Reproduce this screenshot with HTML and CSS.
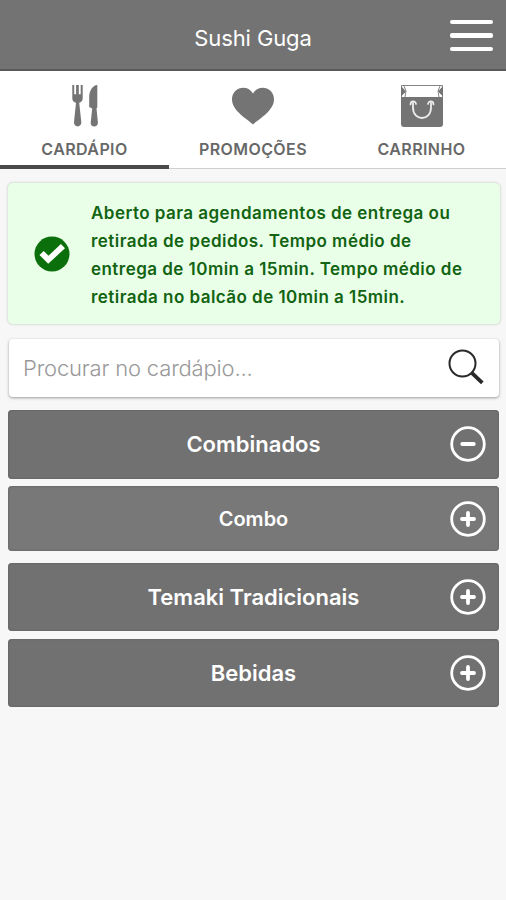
FILE: index.html
```html
<!DOCTYPE html>
<html lang="pt-BR">
<head>
<meta charset="utf-8">
<meta name="viewport" content="width=device-width, initial-scale=1">
<title>Sushi Guga</title>
<link rel="stylesheet" href="styles.css">
</head>
<body>
<header class="header">
  <h1 class="header-title"><span>Sushi Guga</span></h1>
  <button class="menu-button" aria-label="Menu"><i></i><i></i><i></i></button>
</header>
<nav class="tabs">
  <a class="tab tab-active">
    <svg class="tab-icon" width="44" height="44" viewBox="0 0 44 44" fill="#747474">
      <path d="M9.3 1h1.9v9.2h1.9V1h2.7v9.2h1.9V1h2v13.4c0 2.400-1.400 3.800-3.500 4.300l2.100 19.400c.4 5.800-7.700 5.800-7.300 0l2-19.400c-2.300-.5-3.700-1.900-3.700-4.300z"/>
      <path d="M34.300 1v22.300l-.8 1.200 1.400 14c.4 5.200-7.800 5.200-7.200 0l1.500-14-3-1.400V12.600C26.300 6.800 29.800 1 34.300 1z"/>
    </svg>
    <span class="tab-label">CARDÁPIO</span>
  </a>
  <a class="tab">
    <svg class="tab-icon" width="44" height="44" viewBox="0 0 44 44" fill="#747474">
      <path d="M22 40.500C17 35.500 1 27 1 15.500C1 3.500 16-.5 22 9.500C28-.5 43 3.500 43 15.500C43 27 27 35.500 22 40.500z"/>
    </svg>
    <span class="tab-label">PROMOÇÕES</span>
  </a>
  <a class="tab">
    <svg class="tab-icon" width="44" height="44" viewBox="0 0 44 44" fill="none">
      <path fill="#747474" d="M1 13h42v27q0 3-3 3H4q-3 0-3-3z"/>
      <path stroke="#858585" stroke-width="1" d="M1.500 14V1.500h41V14"/>
      <path fill="#747474" d="M1 2l5 5.500L1 12.500zM43 2l-5 5.500 5 5z"/>
      <path stroke="#858585" stroke-width="1" d="M4 2l2 5-1 6M40 2l-2 5 1 6"/>
      <path stroke="#eee" stroke-width="1.700" stroke-linecap="round" d="M10.500 20.500c0-4 5.500-4 5.500-.5M28 20c0-3.500 5.500-3.500 5.500.5"/>
      <path stroke="#eee" stroke-width="1.800" stroke-linecap="round" d="M13 19v4.500c0 14 18 14 18 0v-4.500"/>
    </svg>
    <span class="tab-label">CARRINHO</span>
  </a>
</nav>
<main class="content">
  <section class="notice">
    <svg class="notice-icon" width="36" height="36" viewBox="0 0 36 36">
      <circle cx="18" cy="18" r="17.500" fill="#0b6f0b"/>
      <path d="M5.500 19l8.700 8.700L31 12.300 26.900 8 14.500 19.700 9.700 15z" fill="#fff"/>
    </svg>
    <p class="notice-text">Aberto para agendamentos de entrega ou<br>retirada de pedidos. Tempo médio de<br>entrega de 10min a 15min. Tempo médio de<br>retirada no balcão de 10min a 15min.</p>
  </section>
  <div class="search">
    <span class="search-text">Procurar no cardápio...</span>
    <svg width="36" height="36" viewBox="0 0 36 36" fill="none" stroke="#292929">
      <circle cx="14.500" cy="14.500" r="13" stroke-width="2"/>
      <path d="M23.800 23.800l10.500 10" stroke-width="3.800"/>
    </svg>
  </div>
  <div class="categories">
    <div class="category">
      <span class="category-name">Combinados</span>
      <svg class="toggle" width="36" height="36" viewBox="0 0 36 36" fill="none" stroke="#fff"><circle cx="18" cy="18" r="16.300" stroke-width="2.800"/><path d="M12.300 18h11.400" stroke-width="4" stroke-linecap="round"/></svg>
    </div>
    <div class="category category-small">
      <span class="category-name name-combo">Combo</span>
      <svg class="toggle" width="36" height="36" viewBox="0 0 36 36" fill="none" stroke="#fff"><circle cx="18" cy="18" r="16.300" stroke-width="2.800"/><path d="M12 18h12M18 12v12" stroke-width="3.800" stroke-linecap="round"/></svg>
    </div>
    <div class="category">
      <span class="category-name">Temaki Tradicionais</span>
      <svg class="toggle" width="36" height="36" viewBox="0 0 36 36" fill="none" stroke="#fff"><circle cx="18" cy="18" r="16.300" stroke-width="2.800"/><path d="M12 18h12M18 12v12" stroke-width="3.800" stroke-linecap="round"/></svg>
    </div>
    <div class="category">
      <span class="category-name">Bebidas</span>
      <svg class="toggle" width="36" height="36" viewBox="0 0 36 36" fill="none" stroke="#fff"><circle cx="18" cy="18" r="16.300" stroke-width="2.800"/><path d="M12 18h12M18 12v12" stroke-width="3.800" stroke-linecap="round"/></svg>
    </div>
  </div>
</main>
</body>
</html>
```
FILE: styles.css
```css
* { box-sizing: border-box; }
body {
  margin: 0;
  min-height: 900px;
  background: #f7f7f7;
  font-family: Inter, "Liberation Sans", sans-serif;
}
.header {
  display: grid;
  grid-template-columns: 56px 1fr 56px;
  height: 71px;
  background: #737373;
  border-bottom: 2px solid #595959;
}
.header-title {
  grid-column: 2;
  margin: 0;
  padding-top: 24px;
  text-align: center;
  color: #fff;
  font-size: 22px;
  line-height: 28px;
  font-weight: 400;
  letter-spacing: -0.1px;
}
.menu-button {
  display: flex;
  flex-direction: column;
  gap: 9px;
  padding: 20px 0 0;
  border: 0;
  background: none;
}
.menu-button i {
  width: 43px;
  height: 4.3px;
  border-radius: 2px;
  background: #fff;
}
.tabs {
  display: grid;
  grid-template-columns: 169px 168px 169px;
  height: 98px;
  background: #fff;
}
.tab {
  display: flex;
  flex-direction: column;
  align-items: center;
  padding-top: 13px;
  border-bottom: 1px solid #d0d0d0;
}
.tab-active { border-bottom: 4px solid #4b4b4b; }
.tab-icon { flex: none; }
.tab-label {
  margin-top: 11px;
  color: #686868;
  font-size: 16px;
  line-height: 20px;
  font-weight: 600;
  letter-spacing: 0.4px;
  white-space: nowrap;
}
.content { padding: 13px 5px 0 7px; }
.notice {
  display: flex;
  align-items: center;
  height: 143px;
  padding-left: 26px;
  border: 1px solid #dfe6df;
  border-radius: 6px;
  background: #e9ffe8;
  box-shadow: 0 0 2px #ddd;
}
.notice-icon { flex: none; }
.notice-text {
  margin: 1px 0 0 21px;
  padding-top: 1px;
  color: #126312;
  font-size: 17px;
  line-height: 28px;
  font-weight: 600;
  letter-spacing: 0.46px;
  white-space: nowrap;
}
.search {
  display: flex;
  align-items: center;
  justify-content: space-between;
  height: 58px;
  margin: 14px 0 0 2px;
  width: 490px;
  padding: 0 15px 2px 14px;
  border-radius: 4px;
  background: #fff;
  box-shadow: 0 1px 3px #999;
}
.search-text {
  padding-top: 2px;
  color: #999;
  font-size: 22px;
  font-weight: 300;
  letter-spacing: -0.17px;
}
.categories {
  display: grid;
  gap: 7.5px;
  margin: 13px 0 0 1px;
  width: 491px;
}
.category {
  display: grid;
  grid-template-columns: 49px 1fr 49px;
  align-items: center;
  height: 68.6px;
  border-radius: 4px;
  background: #717171;
  box-shadow: inset 0 0 2px #555;
}
.category-small {
  height: 65px;
  margin-bottom: 4px;
  background: #787878;
}
.category-name {
  grid-column: 2;
  text-align: center;
  color: #fff;
  font-size: 22px;
  line-height: 28px;
  font-weight: 600;
}
.name-combo { font-size: 20px; }
```
